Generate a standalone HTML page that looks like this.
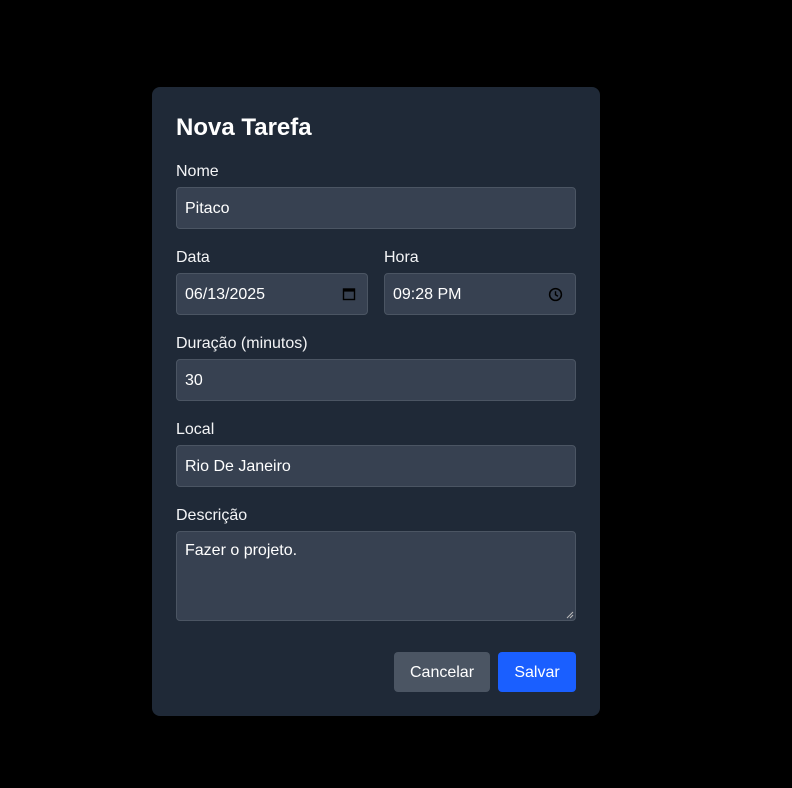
<!DOCTYPE html>
<html><head><meta charset="utf-8"><style>
*{box-sizing:border-box;margin:0;padding:0}
body{width:792px;height:788px;background:#000;font-family:"Liberation Sans",sans-serif;position:relative;overflow:hidden;color:#fff}
.card{position:absolute;left:152px;top:87px;width:448px;height:629px;background:#1f2937;border-radius:8px}
.t{position:absolute;left:24px;top:27px;font-size:24px;font-weight:bold}
.l{position:absolute;font-size:16px;color:#f3f4f6}
.i{position:absolute;height:42px;background:#374151;border:1px solid #4b5563;border-radius:4px;font-size:16px;padding:1px 8px 0;line-height:40px;color:#fff}
.b{position:absolute;top:565px;height:40px;border-radius:4px;font-size:16px;line-height:41px;text-align:center}
svg{position:absolute}
</style></head><body>
<div class="card">
<div class="t">Nova Tarefa</div>
<div class="l" style="left:24px;top:76px">Nome</div>
<div class="i" style="left:24px;top:100px;width:400px">Pitaco</div>
<div class="l" style="left:24px;top:162px">Data</div>
<div class="i" style="left:24px;top:186px;width:192px">06/13/2025
<svg style="left:165px;top:13px" width="14" height="14" viewBox="0 0 14 14"><rect x="1.5" y="2" width="11" height="10.5" fill="none" stroke="#000" stroke-width="1.4"/><rect x="1" y="2" width="12" height="2.6" fill="#000"/></svg></div>
<div class="l" style="left:232px;top:162px">Hora</div>
<div class="i" style="left:232px;top:186px;width:192px">09:28 PM
<svg style="left:163px;top:13px" width="15" height="15" viewBox="0 0 16 16"><circle cx="8" cy="8" r="6.3" fill="none" stroke="#000" stroke-width="1.6"/><path d="M8 4.5V8.3l2.6 1.6" fill="none" stroke="#000" stroke-width="1.5"/></svg></div>
<div class="l" style="left:24px;top:248px">Duração (minutos)</div>
<div class="i" style="left:24px;top:272px;width:400px">30</div>
<div class="l" style="left:24px;top:334px">Local</div>
<div class="i" style="left:24px;top:358px;width:400px">Rio De Janeiro</div>
<div class="l" style="left:24px;top:420px">Descrição</div>
<div class="i" style="left:24px;top:444px;width:400px;height:90px;line-height:20px;padding-top:9px">Fazer o projeto.
<svg style="left:389px;top:79px" width="8" height="8" viewBox="0 0 8 8"><path d="M7 1L1 7M7 4L4 7" stroke="#bbb" stroke-width="1"/></svg></div>
<div class="b" style="left:242px;width:96px;background:#4b5563">Cancelar</div>
<div class="b" style="left:346px;width:78px;background:#1a5fff">Salvar</div>
</div>
</body></html>
